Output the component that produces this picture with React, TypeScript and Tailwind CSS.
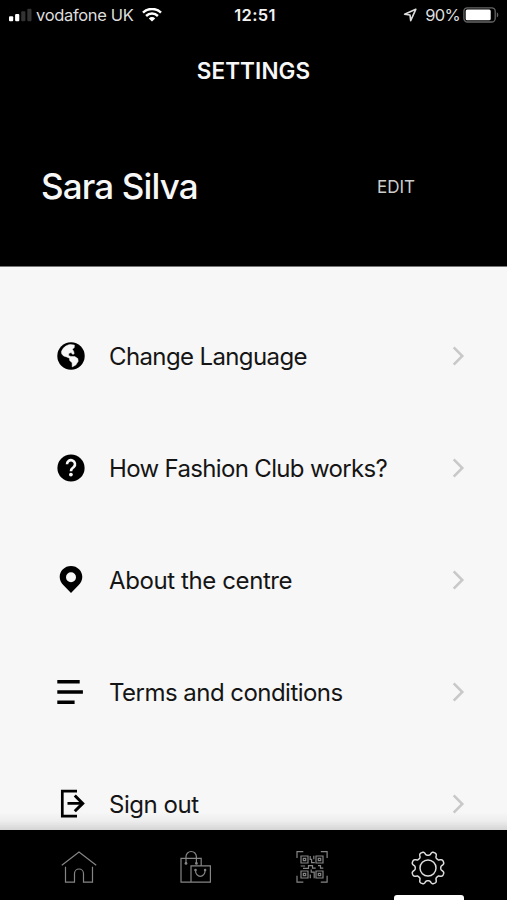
import type { ReactNode } from "react";

const gearPath =
  Array.from({ length: 180 }, (_, i) => {
    const a = (i * 2 * Math.PI) / 180;
    const wave = Math.cos(8 * (a - Math.PI / 8));
    const r = 14.7 + (1.9 * Math.tanh(2 * wave)) / Math.tanh(2);
    return `${i ? "L" : "M"}${(18 + r * Math.cos(a)).toFixed(2)} ${(18 + r * Math.sin(a)).toFixed(2)}`;
  }).join("") + "Z";

function GlobeIcon() {
  return (
    <svg width="30" height="30" viewBox="0 0 30 30">
      <circle cx="15" cy="15" r="13.7" fill="#000" />
      <path
        d="M5.4 10.8C6.6 7 9.6 4.2 14.2 3.5L18.4 4.1L18.3 6.4L16.4 8.3L17.6 10.2L18.2 12.6L16.8 13.4L15 11.6L12.8 12.4L12.6 14.6L14.8 15.4L18.8 15.6L21.8 17.6L22.2 20.2L19.8 24L16.2 25.9L16.1 21.8L13.6 19.4L13.5 17.2L10.6 15.9L7.6 15L5.8 13Z"
        fill="#f7f7f7"
        stroke="#f7f7f7"
        strokeWidth=".5"
        strokeLinejoin="round"
      />
    </svg>
  );
}

function HelpIcon() {
  return (
    <svg width="30" height="30" viewBox="0 0 30 30" fill="none">
      <circle cx="15" cy="15" r="13.6" fill="#000" />
      <path d="M11 11.2a4 4 0 1 1 6.9 2.7C16.2 15.3 15 15.7 15 18.3" stroke="#f7f7f7" strokeWidth="2.6" />
      <circle cx="14.9" cy="21.6" r="1.9" fill="#f7f7f7" />
    </svg>
  );
}

function PinIcon() {
  return (
    <svg width="30" height="30" viewBox="0 0 30 30">
      <path
        fillRule="evenodd"
        d="M15 .9C8.6 .9 3.7 5.8 3.7 12c0 3.2 1.5 6 3.8 8.3L15 28l7.5-7.7c2.3-2.3 3.8-5.1 3.8-8.3C26.3 5.8 21.4 .9 15 .9ZM15 7.3a5 5 0 1 1 0 10a5 5 0 0 1 0-10Z"
      />
    </svg>
  );
}

function LinesIcon() {
  return (
    <svg width="30" height="30" viewBox="0 0 30 30" stroke="#000" strokeWidth="3.4">
      <path d="M1.3 4.7h22.4M1.3 15h25.6M1.3 25.2h17.3" />
    </svg>
  );
}

function SignOutIcon() {
  return (
    <svg width="30" height="30" viewBox="0 0 30 30" fill="none" stroke="#000" strokeWidth="2.7">
      <path d="M21 2.2H6.3v25H21M11.5 14.4h15.3" />
      <path d="M18.8 6.5l7.9 7.9l-7.9 7.9" strokeWidth="3" />
    </svg>
  );
}

const rows: { label: string; icon: ReactNode; spacing: string }[] = [
  { label: "Change Language", icon: <GlobeIcon />, spacing: "tracking-[-0.62px]" },
  { label: "How Fashion Club works?", icon: <HelpIcon />, spacing: "tracking-[-0.66px]" },
  { label: "About the centre", icon: <PinIcon />, spacing: "tracking-[-0.4px]" },
  { label: "Terms and conditions", icon: <LinesIcon />, spacing: "tracking-[-0.53px]" },
  { label: "Sign out", icon: <SignOutIcon />, spacing: "tracking-[-0.45px]" },
];

function StatusBar() {
  return (
    <div className="grid h-[30px] grid-cols-[1fr_auto_1fr] items-center pr-[7px] pl-[9px] text-[16.5px] leading-[30px] text-[#dedede]">
      <div className="flex items-center">
        <svg width="24" height="14" viewBox="0 0 24 14" className="mr-[3px]">
          <rect y="8.2" width="4.2" height="5" rx="1" fill="#fff" />
          <rect x="6.1" y="6" width="4.2" height="7.2" rx="1" fill="#fff" />
          <rect x="12.2" y="3.2" width="4.2" height="10" rx="1" fill="#333" />
          <rect x="18.3" y=".8" width="4.2" height="12.4" rx="1" fill="#333" />
        </svg>
        <span className="w-[106px] tracking-[-0.32px] whitespace-nowrap">vodafone UK</span>
        <svg width="20" height="14" viewBox="0 0 20 14" fill="none" stroke="#fff" strokeWidth="2.5">
          <path d="M1 4.6a13 13 0 0 1 18 0M4.1 8a8.5 8.5 0 0 1 11.8 0" />
          <path d="M10 13.5L6.8 10.4a4.6 4.6 0 0 1 6.4 0Z" fill="#fff" stroke="none" />
        </svg>
      </div>
      <span className="pl-[1px] font-semibold tracking-[0.3px] text-[#f2f2f2]">12:51</span>
      <div className="flex items-center justify-end">
        <svg width="14" height="14" viewBox="0 0 14 14" fill="none" stroke="#ddd" strokeWidth="1.6" strokeLinejoin="round" className="mr-[8px]">
          <path d="M12.8 1.3L1.6 6.2l5.4.8l.7 5.6Z" />
        </svg>
        <span className="mr-[3px] tracking-[-0.7px]">90%</span>
        <svg width="37" height="16" viewBox="0 0 37 16">
          <rect x=".9" y=".8" width="31.3" height="14.2" rx="3.5" fill="none" stroke="#666" strokeWidth="1.3" />
          <rect x="2.7" y="2.5" width="25" height="10.8" rx="1.5" fill="#fff" />
          <path d="M33.8 5.3a3 3 0 0 1 0 5.2Z" fill="#666" />
        </svg>
      </div>
    </div>
  );
}

function TabBar() {
  return (
    <nav className="grid h-[70px] shrink-0 grid-cols-[158px_74px_158px_75px] bg-black pt-[20px] pr-[42px]">
      <div className="flex justify-center">
        <svg width="36" height="36" viewBox="0 0 36 36" fill="none" stroke="#858585" strokeWidth="1.2">
          <path d="M.8 15.3L18 2.1l17.2 13.2M4.5 16.7v15.4h9V23.5a4.5 4.5 0 0 1 9 0v8.6h9V16.7" />
        </svg>
      </div>
      <div className="flex justify-center">
        <svg width="36" height="36" viewBox="0 0 36 36" fill="none" stroke="#858585" strokeWidth="1.2">
          <g transform="translate(0 -.8)">
            <path d="M14 33H4V9.2h20.2v7.2M14 16.7h19.4V33H14ZM9 13.8V7.5a5.2 5.2 0 0 1 10.4 0v6.3M18.5 21.3a4.8 5.8 0 0 0 9.6 0" />
            <g fill="#858585" stroke="none">
              <circle cx="9" cy="14.2" r="1.4" />
              <circle cx="19.4" cy="14.2" r="1.4" />
              <circle cx="18.5" cy="20.8" r="1.3" />
              <circle cx="28.1" cy="20.8" r="1.3" />
            </g>
          </g>
        </svg>
      </div>
      <div className="flex justify-center pl-[2px]">
        <svg width="36" height="36" viewBox="0 0 36 36" fill="none" stroke="#858585" strokeWidth="1.2">
          <g transform="translate(0 -1)">
            <path d="M3 9V2.7h6.3M26.8 2.7h6.3V9M33.1 26.8v6.3h-6.3M9.3 33.1H3v-6.3" />
            <path d="M7 7h7v7H7ZM22 7h7v7h-7ZM7 22h7v7H7ZM22 22h7v7h-7Z" />
            <path d="M9.3 9.3h2.4v2.4H9.3ZM24.3 9.3h2.4v2.4h-2.4ZM9.3 24.3h2.4v2.4H9.3ZM24.3 24.3h2.4v2.4h-2.4ZM16.2 7v3.4h1.4v3.2h3.2M19.8 6.7v3.5M6.7 17h4.5M9 19.3h5.5v-2.6h4v2.5h3.2M24 16.7h2.5v2.4h2.8M17.2 20.5v2.7h3v6M16.3 25.5v3.7" />
          </g>
        </svg>
      </div>
      <div className="relative flex justify-center">
        <svg width="36" height="36" viewBox="0 0 36 36" fill="none" stroke="#ddd" strokeWidth="1.5">
          <path d={gearPath} />
          <circle cx="18" cy="18" r="8" />
        </svg>
        <span className="absolute bottom-0 left-[3.5px] h-[5.5px] w-[70px] rounded-t-[3px] bg-white" />
      </div>
    </nav>
  );
}

export default function App() {
  return (
    <main className="flex h-[900px] w-[507px] flex-col overflow-hidden bg-[#f7f7f7] font-['Inter','Liberation_Sans',sans-serif]">
      <header className="h-[266px] shrink-0 bg-black text-[#f7f7f7]">
        <StatusBar />
        <h1 className="mt-[25px] text-center text-[22.5px] leading-[32px] font-semibold tracking-[0.1px]">SETTINGS</h1>
        <div className="mt-[75px] flex h-[48px] items-center justify-between pr-[92px] pl-[41px]">
          <h2 className="text-[35px] leading-[48px] font-medium tracking-[-0.85px]">Sara Silva</h2>
          <button className="pt-[1px] text-[17px] leading-[24px] text-[#ccc]">EDIT</button>
        </div>
      </header>
      <section className="min-h-0 flex-1 overflow-hidden border-t border-[#777] pt-[33px]">
        {rows.map((row) => (
          <div key={row.label} className="flex h-[112px] items-center pr-[42px] pl-[56px] text-[#151515]">
            {row.icon}
            <span className={`ml-[23px] flex-1 pt-[2px] text-[24px] leading-[32px] whitespace-nowrap ${row.spacing}`}>{row.label}</span>
            <svg width="13" height="20" viewBox="0 0 13 20" fill="none" stroke="#c8c8c8" strokeWidth="2.5">
              <path d="M1.7 1.4L10.3 10l-8.6 8.6" />
            </svg>
          </div>
        ))}
      </section>
      <div className="-mt-[18px] h-[18px] shrink-0 bg-linear-to-b from-transparent via-black/4 to-black/14" />
      <TabBar />
    </main>
  );
}
